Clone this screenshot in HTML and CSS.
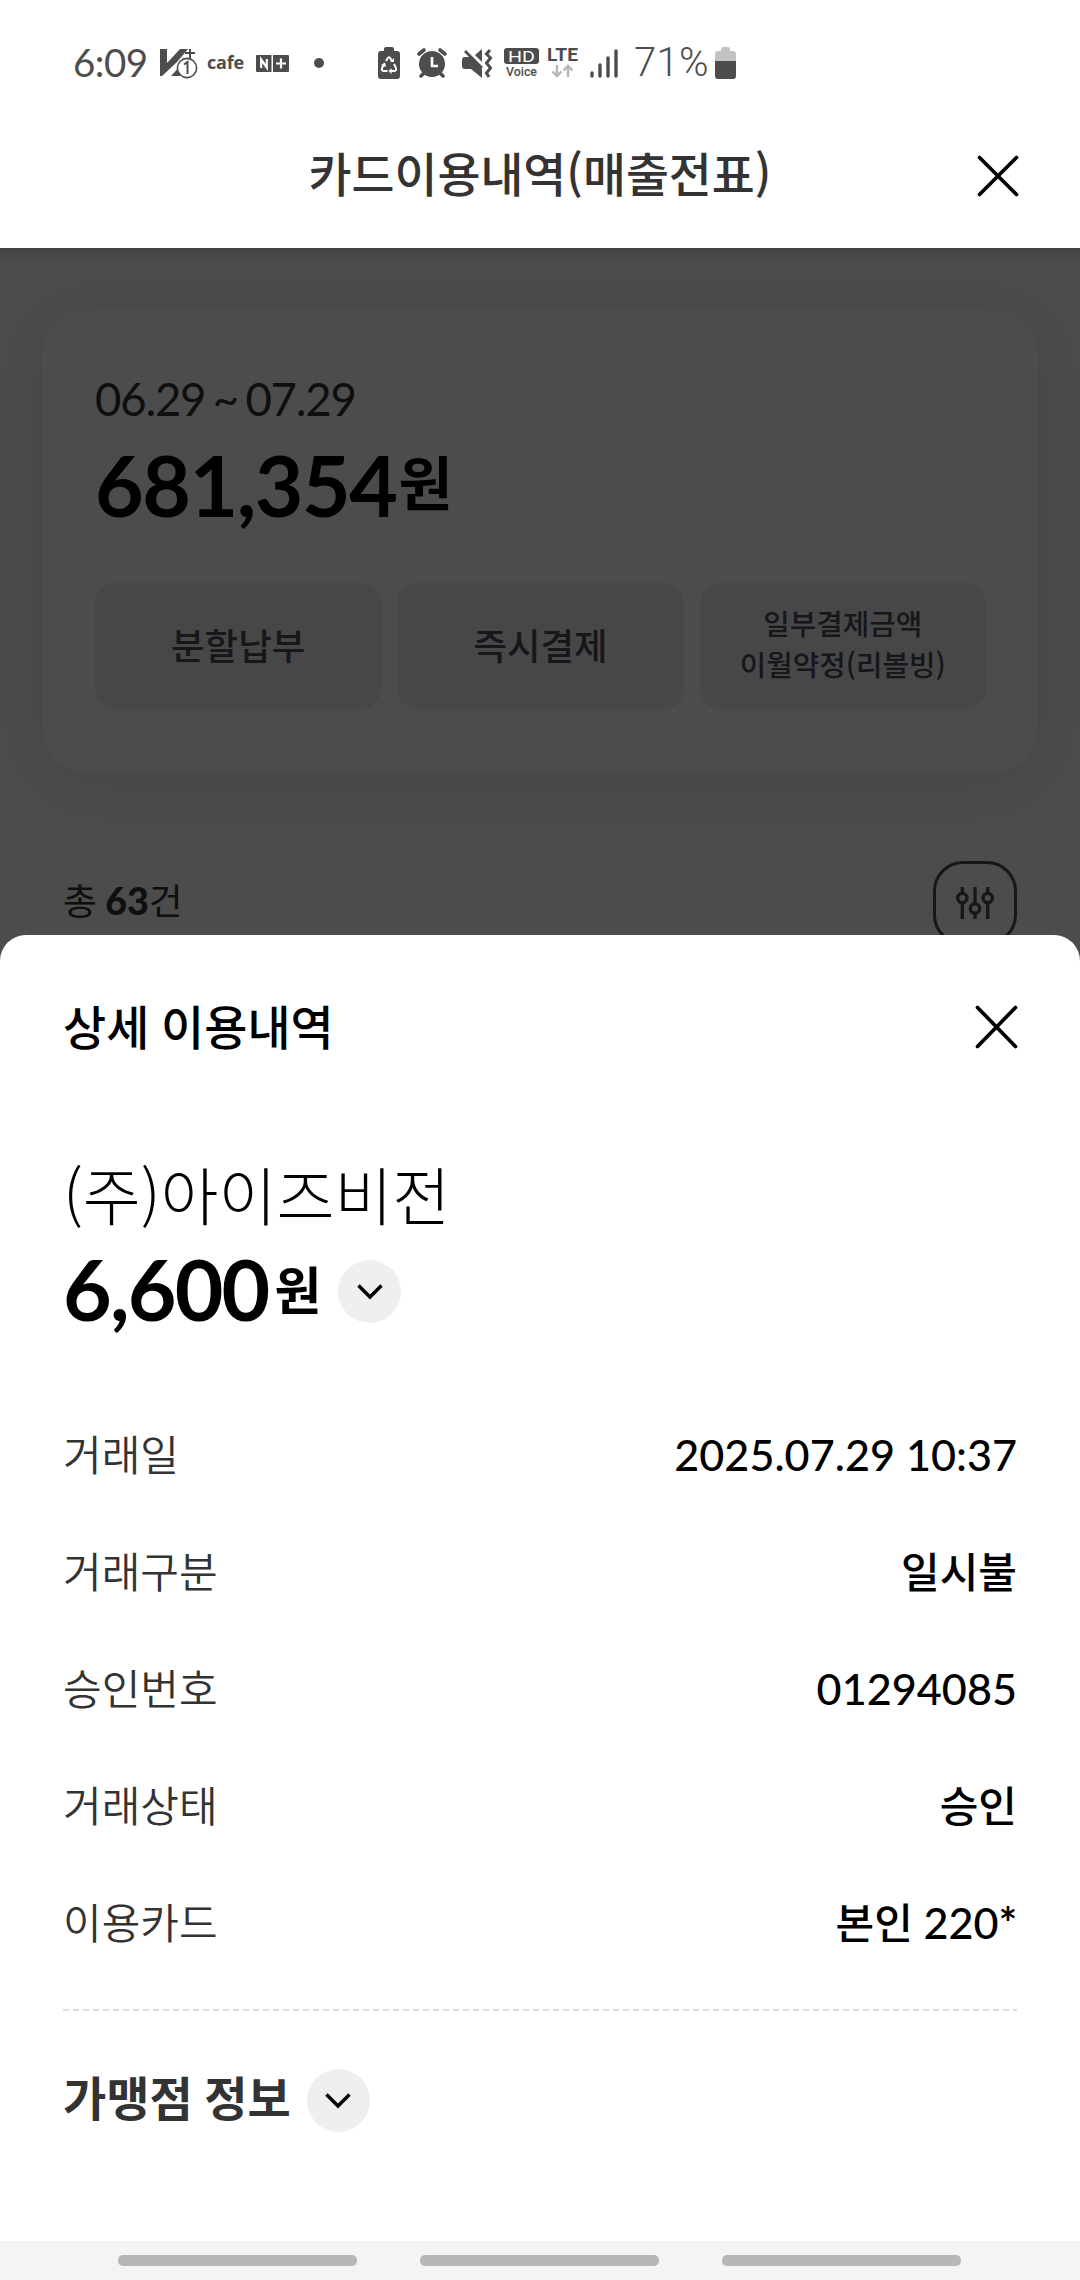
FILE: index.html
```html
<!DOCTYPE html>
<html lang="ko">
<head>
<meta charset="utf-8">
<title>카드이용내역(매출전표)</title>
<link rel="stylesheet" href="styles.css">
</head>
<body>
<div class="screen">
  <div class="status">
    <span class="time">6:09</span>
    <svg class="ico v3" width="38" height="34" viewBox="0 0 38 34"><path d="M0 3H7V17L20 3H28L17 16L2 30H0Z M11 30L20 20V30Z" fill="#4d4d4d"/><path d="M30 3V14M25 7H35" stroke="#4d4d4d" stroke-width="2"/><circle cx="27" cy="22" r="9.6" fill="#fff" stroke="#4d4d4d" stroke-width="1.6"/><path d="M24 18.5L27.5 16V28" fill="none" stroke="#4d4d4d" stroke-width="2"/></svg>
    <span class="cafe">cafe</span>
    <svg class="ico nplus" width="33" height="17" viewBox="0 0 33 17"><path d="M1 0H15.500V17H1Q0 17 0 16V1Q0 0 1 0ZM17 0H32Q33 0 33 1V16Q33 17 32 17H17Z" fill="#4d4d4d"/><path d="M5.2 13V4.5L10.8 12.5V4M25 3.5V13.5M20 8.5H30" fill="none" stroke="#fff" stroke-width="2.2"/></svg>
    <span class="dot"></span>
    <svg class="ico saver" width="22" height="32" viewBox="0 0 22 32"><path d="M6 4V2Q6 0 8 0H14Q16 0 16 2V4H19Q22 4 22 7V29Q22 32 19 32H3Q0 32 0 29V7Q0 4 3 4Z" fill="#4d4d4d"/><path d="M8 14L10 10.8Q11 9.5 12 10.8L14 14M16 17L18 21Q18.7 24 16 24H13M9.5 24H6Q3.3 24 4 21L6 17" fill="none" stroke="#fff" stroke-width="2"/><path d="M12 15H16V11ZM13.5 21V27L10.5 24ZM3 18L7 15.500L8 20Z" fill="#fff"/></svg>
    <svg class="ico alarm" width="30" height="32" viewBox="0 0 30 32"><circle cx="15" cy="17" r="13" fill="#4d4d4d"/><path d="M2 7L7 3M28 7L23 3M4 29L7 26M26 29L23 26" stroke="#4d4d4d" stroke-width="3.600" stroke-linecap="round"/><path d="M15 10V19H21" fill="none" stroke="#fff" stroke-width="2.6"/></svg>
    <svg class="ico mute" width="31" height="32" viewBox="0 0 31 32"><path d="M0 13Q0 10 3 10H8L20 22V31L9 22H3Q0 22 0 19ZM13 8L20 2V15Z" fill="#4d4d4d"/><path d="M3 4L20 21" stroke="#4d4d4d" stroke-width="2.6"/><path d="M28 3L24.500 7L28.500 11L24.500 16L28.500 21L24.500 26L27 30" fill="none" stroke="#4d4d4d" stroke-width="3"/></svg>
    <svg class="ico hd" width="36" height="34" viewBox="0 0 36 34"><rect x="0" y="2" width="35" height="16" rx="3" fill="#4d4d4d"/><text x="17.500" y="15.500" class="t-hd" textLength="27" lengthAdjust="spacingAndGlyphs">HD</text><text x="17.500" y="30" class="t-voice" textLength="31" lengthAdjust="spacingAndGlyphs">Voice</text></svg>
    <svg class="ico lte" width="31" height="34" viewBox="0 0 31 34"><text x="15.500" y="15" class="t-lte" textLength="31" lengthAdjust="spacingAndGlyphs">LTE</text><path d="M10 19V30M5.500 25.500L10 30L14.500 25.500M21 31V20M16.500 24.500L21 20L25.500 24.500" fill="none" stroke="#b5b5b5" stroke-width="2.4"/></svg>
    <svg class="ico signal" width="28" height="30" viewBox="0 0 28 30"><path d="M2 25V28M10 17V28M18 10V28M26 3V28" stroke="#4d4d4d" stroke-width="3.400" stroke-linecap="round"/></svg>
    <span class="pct">71%</span>
    <svg class="ico batt" width="21" height="32" viewBox="0 0 21 32"><path d="M6 4V2Q6 0 8 0H13Q15 0 15 2V4H18Q21 4 21 7V14H0V7Q0 4 3 4Z" fill="#c2c2c2"/><path d="M0 14H21V29Q21 32 18 32H3Q0 32 0 29Z" fill="#4d4d4d"/></svg>
  </div>

  <header class="topbar">
    <h1>카드이용내역(매출전표)</h1>
    <svg class="close" width="40" height="40" viewBox="0 0 40 40"><path d="M1.500 1.500L38.500 38.500M38.500 1.500L1.500 38.500"/></svg>
  </header>

  <main class="behind">
    <section class="bill">
      <p class="period">06.29 ~ 07.29</p>
      <div class="total"><p class="num">681,354</p><p class="won">원</p></div>
      <div class="actions">
        <div class="action">분할납부</div>
        <div class="action">즉시결제</div>
        <div class="action small">일부결제금액<br>이월약정(리볼빙)</div>
      </div>
    </section>
    <div class="listhead">
      <p class="count">총 <b>63</b>건</p>
      <div class="filter">
        <svg width="40" height="32" viewBox="0 0 40 32"><path d="M7.300 0V6M7.300 16V32M20 0V16M20 27V32M32.700 0V6M32.700 16V32"/><circle cx="7.300" cy="11" r="4.700"/><circle cx="20" cy="21.500" r="4.700"/><circle cx="32.700" cy="11" r="4.700"/></svg>
      </div>
    </div>
    <div class="dim"></div>
  </main>

  <section class="sheet">
    <div class="sheet-head">
      <h2>상세 이용내역</h2>
      <svg class="close" width="41" height="42" viewBox="0 0 41 42"><path d="M1.500 1.500L39.500 40.500M39.500 1.500L1.500 40.500"/></svg>
    </div>
    <p class="merchant">(주)아이즈비전</p>
    <div class="amount">
      <p class="num">6,600</p><p class="won">원</p>
      <span class="toggle"><svg width="26" height="17" viewBox="0 0 26 17"><path d="M1.500 2.500L13 14L24.500 2.500"/></svg></span>
    </div>
    <dl class="rows">
      <div class="row"><dt>거래일</dt><dd class="digits">2025.07.29 10:37</dd></div>
      <div class="row"><dt>거래구분</dt><dd>일시불</dd></div>
      <div class="row"><dt>승인번호</dt><dd class="digits">01294085</dd></div>
      <div class="row"><dt>거래상태</dt><dd>승인</dd></div>
      <div class="row"><dt>이용카드</dt><dd>본인 <span class="digits">220<b>*</b></span></dd></div>
    </dl>
    <div class="divider"></div>
    <div class="store">
      <h3>가맹점 정보</h3>
      <span class="toggle"><svg width="26" height="17" viewBox="0 0 26 17"><path d="M1.500 2.500L13 14L24.500 2.500"/></svg></span>
    </div>
  </section>
  <div class="navbar"><i></i><i></i><i></i></div>
</div>
</body>
</html>
```

FILE: styles.css
```css
* { box-sizing: border-box; margin: 0; padding: 0; }
body { background: #fff; font-family: Lato, "Noto Sans CJK KR", sans-serif; color: #000; }
.screen { position: relative; width: 1080px; height: 2280px; overflow: hidden; display: flex; flex-direction: column; }
svg { display: block; flex: none; overflow: visible; }

.status { height: 126px; padding-left: 73px; display: flex; align-items: center; color: #4d4d4d; white-space: nowrap; }
.time { width: 87px; font-size: 38.5px; font-weight: 400; letter-spacing: -.5px; line-height: 60px; padding-bottom: 2px; }
.cafe { width: 48px; margin-left: 9px; font: 700 18px/40px "Open Sans", sans-serif; letter-spacing: -.2px; padding-bottom: 3px; }
.nplus { margin-left: 1px; }
.dot { width: 10px; height: 10px; border-radius: 50%; background: #4d4d4d; margin-left: 25px; }
.saver { margin-left: 54px; }
.alarm { margin-left: 17px; }
.mute { margin-left: 15px; }
.hd { margin-left: 11px; }
.lte { margin-left: 7px; }
.signal { margin-left: 12px; }
.pct { width: 75px; margin-left: 16px; font: 300 40px/60px Roboto, sans-serif; letter-spacing: .3px; }
.batt { margin-left: 6px; }
.t-hd { font: 400 15.5px Roboto, sans-serif; fill: #fff; text-anchor: middle; }
.t-voice { font: 500 12.500px Roboto, sans-serif; fill: #4d4d4d; text-anchor: middle; }
.t-lte { font: 700 19px Roboto, sans-serif; fill: #4d4d4d; text-anchor: middle; }

.topbar { height: 122px; display: grid; grid-template-columns: 200px 1fr 200px; padding-bottom: 22px; align-items: center; }
.topbar h1 { grid-column: 2; text-align: center; font-family: "Noto Sans CJK KR", sans-serif; font-size: 46.700px; font-weight: 500; line-height: 70px; padding-bottom: 8px; color: #333; }
.topbar .close { justify-self: end; margin-right: 62px; }
.close path { fill: none; stroke: #000; stroke-width: 3.700; stroke-linecap: round; }

.behind { position: relative; height: 740px; padding: 62px 42px 0; overflow: hidden; }
.dim { position: absolute; inset: 0; background: linear-gradient(rgba(0,0,0,.12), transparent 14px), rgba(0,0,0,.7); }
.bill { height: 462px; padding: 60px 52px 0 53px; border-radius: 46px; box-shadow: 0 9px 66px rgba(50,90,140,.17); }
.period { font-size: 45.500px; line-height: 58px; height: 60px; letter-spacing: -1.200px; word-spacing: -3px; color: #333; }
.total { height: 100px; margin-top: 5px; display: flex; align-items: center; }
.total .num { font-size: 84px; font-weight: 700; line-height: 100px; letter-spacing: -1.500px; }
.total .won { font-size: 59px; font-weight: 700; line-height: 90px; padding-bottom: 3px; margin-left: 2px; }
.actions { display: grid; grid-template-columns: repeat(3, 1fr); gap: 16px; margin-top: 48px; }
.action { height: 126px; border-radius: 20px; background: #ededf2; display: flex; align-items: center; justify-content: center; text-align: center; font-family: "Noto Sans CJK KR", sans-serif; font-size: 36.500px; font-weight: 500; line-height: 50px; padding-bottom: 2px; color: #4a4b5c; }
.action.small { font-size: 28.800px; line-height: 41px; padding-bottom: 7px; }
.listhead { display: flex; justify-content: space-between; align-items: flex-start; padding: 89px 21px 0; }
.count { font-size: 36.800px; line-height: 80px; color: #333; }
.count b { font-weight: 900; font-size: 37.500px; margin-left: -1px; }
.filter { width: 84px; height: 84px; border: 3px solid #4a4b5c; border-radius: 30px; display: grid; place-items: center; }
.filter svg { fill: none; stroke: #4a4b5c; stroke-width: 3.300; }

.sheet { position: absolute; left: 0; right: 0; top: 935px; height: 1306px; padding: 0 63px; background: #fff; border-radius: 26px 26px 0 0; }
.sheet-head { height: 184px; display: flex; align-items: center; justify-content: space-between; }
.sheet-head h2 { font-size: 46.900px; font-weight: 500; line-height: 70px; }
.merchant { margin-top: 29px; height: 93px; font-family: "Noto Sans CJK KR", sans-serif; font-size: 63px; font-weight: 300; line-height: 90px; }
.amount { display: flex; align-items: center; height: 100px; }
.amount .num { font-size: 84px; font-weight: 700; line-height: 100px; letter-spacing: -1.800px; padding-bottom: 4px; }
.amount .won { font-size: 51px; font-weight: 700; line-height: 80px; margin-left: 6px; }
.toggle { width: 63px; height: 63px; border-radius: 50%; background: #efefef; display: grid; place-items: center; margin-left: 17px; }
.toggle path { fill: none; stroke: #000; stroke-width: 3.400; }
.rows { margin-top: 56px; }
.row { height: 116.800px; display: flex; align-items: center; justify-content: space-between; line-height: 60px; }
.row dt { font-size: 42px; color: #333; font-weight: 350; }
.row dd { font-size: 42px; font-weight: 500; }
.row .digits { font-size: 43.200px; }
.row dd.digits { padding-bottom: 2px; }
.divider { height: 2px; margin-top: 28px; background: repeating-linear-gradient(90deg, #ddd 0 6px, transparent 6px 10px); }
.store { display: flex; align-items: center; margin-top: 55px; height: 70px; }
.store h3 { font-size: 47px; font-weight: 700; line-height: 70px; padding-bottom: 5px; color: #333; }
.store .toggle { margin-left: 16px; }

.navbar { position: absolute; left: 0; right: 0; bottom: 0; height: 39px; background: #f4f4f4; display: flex; justify-content: center; gap: 63px; padding: 14px 1px 0 0; }
.navbar i { width: 239px; height: 11px; border-radius: 5px; background: #b7b7b7; }
```
